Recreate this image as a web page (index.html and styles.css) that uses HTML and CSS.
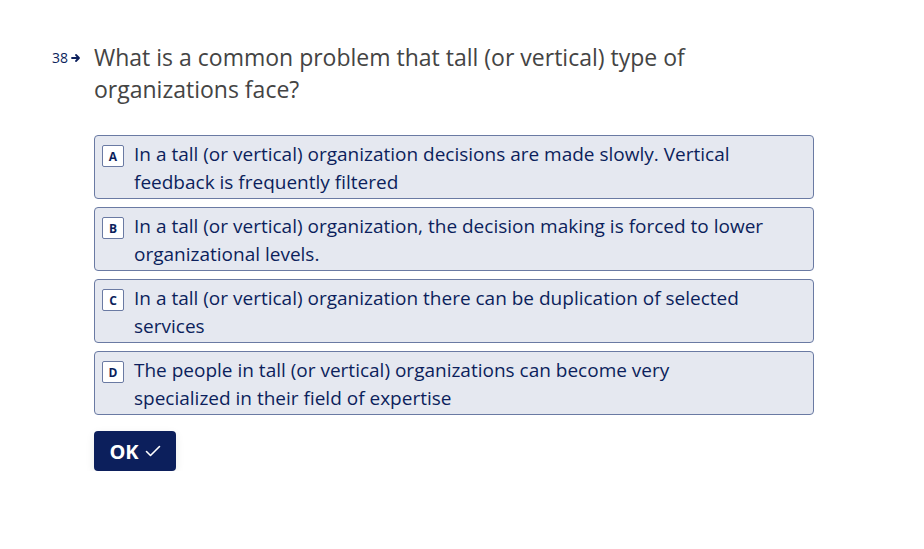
FILE: index.html
```html
<!DOCTYPE html>
<html>
<head>
<meta charset="utf-8">
<link rel="stylesheet" href="styles.css">
</head>
<body>
<div class="page">
  <div class="question">
    <div class="qnum"><span>38</span><svg class="arrow" width="10" height="10" viewBox="0 0 10 10"><path d="M1 5h6.5M5 2l3 3-3 3" fill="none" stroke="#0c1f5c" stroke-width="1.8" stroke-linecap="round" stroke-linejoin="round"/></svg></div>
    <div class="qbody">
      <h1 class="qtext">What is a common problem that tall (or vertical) type of organizations face?</h1>
      <div class="options">
        <div class="option"><span class="key">A</span><span class="label">In a tall (or vertical) organization decisions are made slowly. Vertical feedback is frequently filtered</span></div>
        <div class="option"><span class="key">B</span><span class="label">In a tall (or vertical) organization, the decision making is forced to lower organizational levels.</span></div>
        <div class="option"><span class="key">C</span><span class="label">In a tall (or vertical) organization there can be duplication of selected services</span></div>
        <div class="option"><span class="key">D</span><span class="label">The people in tall (or vertical) organizations can become very specialized in their field of expertise</span></div>
      </div>
      <button class="ok">OK <svg width="16" height="14" viewBox="0 0 16 14"><path d="M1.5 7.5l4 4L14.5 2.5" fill="none" stroke="#fff" stroke-width="1.6" stroke-linecap="round" stroke-linejoin="round"/></svg></button>
    </div>
  </div>
</div>
</body>
</html>
```
FILE: styles.css
```css
* { box-sizing: border-box; }
html, body { margin: 0; padding: 0; background: #fff; }
body { font-family: "Open Sans", "Noto Sans", sans-serif; }
.page { padding: 41px 0 0 0; }
.question { display: flex; }
.qnum {
  width: 94px;
  display: flex;
  justify-content: flex-end;
  align-items: center;
  gap: 3px;
  padding-right: 13px;
  height: 32px;
  font-size: 14px;
  color: #0c1f5c;
}
.arrow { margin-top: 1px; }
.qbody { width: 720px; }
.qtext {
  margin: 0 0 30px 0;
  font-size: 23px;
  line-height: 32px;
  font-weight: 400;
  color: #444;
  width: 640px;
}
.options { display: flex; flex-direction: column; gap: 8px; }
.option {
  display: flex;
  align-items: flex-start;
  background: #e5e8f0;
  border: 1px solid #6a7aa3;
  border-radius: 4px;
  padding: 4px 8px 2px 7px;
  min-height: 64px;
}
.key {
  flex: none;
  width: 22px;
  height: 22px;
  margin-top: 5px;
  margin-right: 10px;
  border: 1px solid #6a7aa3;
  border-radius: 2px;
  background: #fff;
  color: #0c1f5c;
  font-size: 12px;
  font-weight: 700;
  display: flex;
  align-items: center;
  justify-content: center;
}
.label {
  max-width: 635px;
  font-size: 19px;
  line-height: 28px;
  color: #0c1f5c;
}
.ok {
  margin-top: 16px;
  height: 40px;
  width: 82px;
  border: none;
  border-radius: 4px;
  background: #0c1f5c;
  color: #fff;
  font-family: "Open Sans", "Noto Sans", sans-serif;
  font-size: 20px;
  font-weight: 700;
  display: flex;
  align-items: center;
  justify-content: center;
  gap: 6px;
  padding: 0;
  box-shadow: 0 3px 10px rgba(0,0,0,0.08);
}
```
